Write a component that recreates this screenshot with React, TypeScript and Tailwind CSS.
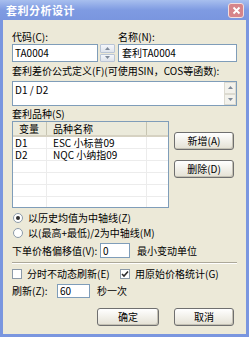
import clsx from "clsx";
import type { ReactNode } from "react";

function Btn({ children, className }: { children: ReactNode; className?: string }) {
  return (
    <div
      className={clsx(
        "flex items-center justify-center h-[18px] rounded-[3px] border border-[#6f6f6f] bg-gradient-to-b from-[#ffffff] to-[#e4e1d4] shadow-[inset_-1px_-1px_0_#c4c1b4]",
        className
      )}
    >
      {children}
    </div>
  );
}

function Radio({ checked }: { checked?: boolean }) {
  return (
    <span className="w-[10px] h-[10px] rounded-full border border-[#8c9aa8] bg-white flex items-center justify-center shrink-0">
      {checked && <span className="w-[4px] h-[4px] rounded-full bg-[#303030]" />}
    </span>
  );
}

function Check({ checked }: { checked?: boolean }) {
  return (
    <span className="w-[10px] h-[10px] border border-[#8c9aa8] bg-white flex items-center justify-center shrink-0">
      {checked && (
        <svg width="8" height="8" viewBox="0 0 8 8">
          <path d="M1 4 L3 6 L7 1.5" stroke="#2c2c2c" strokeWidth="1.6" fill="none" />
        </svg>
      )}
    </span>
  );
}

function Arrow({ up }: { up?: boolean }) {
  return (
    <svg width="5" height="3" viewBox="0 0 5 3">
      <path d={up ? "M0 3 L2.5 0 L5 3 Z" : "M0 0 L2.5 3 L5 0 Z"} fill="#7f8a9a" />
    </svg>
  );
}

const rows = [
  { v: "D1", n: "ESC 小标普09" },
  { v: "D2", n: "NQC 小纳指09" },
  { v: "", n: "" },
  { v: "", n: "" },
  { v: "", n: "" },
  { v: "", n: "" },
];

export default function App() {
  return (
    <div className="w-[249px] h-[337px] flex flex-col bg-[#7a96df] text-[10px] leading-[12px] text-black font-['Noto_Sans_CJK_SC',sans-serif] overflow-hidden">
      {/* Title bar */}
      <div className="h-[20px] shrink-0 flex items-center justify-between pl-[6px] pr-[5px] bg-gradient-to-b from-[#a8bfee] via-[#7f9be2] to-[#7a96df]">
        <span className="text-white font-bold text-[11px] tracking-[0.5px]">套利分析设计</span>
        <div className="w-[16px] h-[15px] rounded-[3px] border border-[#f2dede] bg-[#d6848a] flex items-center justify-center">
          <svg width="9" height="9" viewBox="0 0 9 9">
            <path d="M1.5 1.5 L7.5 7.5 M7.5 1.5 L1.5 7.5" stroke="#ffffff" strokeWidth="1.8" />
          </svg>
        </div>
      </div>

      {/* Body */}
      <div className="flex-1 mx-[3px] mb-[3px] bg-[#ece9d8] flex flex-col px-[9px] pt-[11px]">
        {/* Code / name */}
        <div className="flex">
          <span className="w-[106px]">代码(C):</span>
          <span>名称(N):</span>
        </div>
        <div className="flex mt-[1px] h-[18px]">
          <div className="w-[86px] border border-[#7f9db9] bg-white flex items-center pl-[2px]">TA0004</div>
          <div className="ml-[2px] w-[15px] flex flex-col gap-[1px]">
            <div className="flex-1 border border-[#b9c5d6] bg-gradient-to-b from-[#f5f7fb] to-[#dfe4ec] flex items-center justify-center rounded-[1px]">
              <Arrow up />
            </div>
            <div className="flex-1 border border-[#b9c5d6] bg-gradient-to-b from-[#f5f7fb] to-[#dfe4ec] flex items-center justify-center rounded-[1px]">
              <Arrow />
            </div>
          </div>
          <div className="ml-[3px] flex-1 border border-[#7f9db9] bg-white flex items-center pl-[3px]">套利TA0004</div>
        </div>

        {/* Formula */}
        <div className="mt-[3px] whitespace-nowrap">套利差价公式定义(F)(可使用SIN，COS等函数):</div>
        <div className="mt-[4px] h-[25px] border border-[#7f9db9] bg-white flex">
          <div className="flex-1 pl-[2px] pt-[2px]">D1 / D2</div>
          <div className="w-[12px] flex flex-col bg-[#f7f6f1]">
            <div className="flex-1 border border-[#dcdad0] bg-[#f3f2ec] flex items-center justify-center">
              <Arrow up />
            </div>
            <div className="flex-1 border border-[#dcdad0] bg-[#f3f2ec] flex items-center justify-center">
              <Arrow />
            </div>
          </div>
        </div>

        {/* List */}
        <div className="mt-[2px]">套利品种(S)</div>
        <div className="mt-[1px] flex">
          <div className="w-[157px] h-[87px] border border-[#7f9db9] bg-white flex flex-col overflow-hidden">
            <div className="h-[15px] shrink-0 flex bg-[#ebeadb] border-b-[2px] border-[#d6d2c2]">
              <div className="w-[34px] border-r border-[#c7c5b2] pl-[6px] flex items-center">变量</div>
              <div className="w-[100px] border-r border-[#c7c5b2] pl-[6px] flex items-center">品种名称</div>
              <div className="flex-1" />
            </div>
            {rows.map((r, i) => (
              <div key={i} className="h-[12px] shrink-0 flex border-b border-[#ececec] leading-[11px]">
                <div className="w-[34px] border-r border-[#ececec] pl-[2px]">{r.v}</div>
                <div className="w-[100px] border-r border-[#ececec] pl-[6px]">{r.n}</div>
                <div className="flex-1" />
              </div>
            ))}
          </div>
          <div className="ml-[5px] flex-1 flex flex-col pt-[11px] gap-[10px]">
            <Btn className="w-[60px]">新增(A)</Btn>
            <Btn className="w-[60px]">删除(D)</Btn>
          </div>
        </div>

        {/* Radios */}
        <div className="mt-[4px] flex items-center gap-[5px] pl-[1px]">
          <Radio checked />
          <span>以历史均值为中轴线(Z)</span>
        </div>
        <div className="mt-[3px] flex items-center gap-[5px] pl-[1px]">
          <Radio />
          <span>以(最高+最低)/2为中轴线(M)</span>
        </div>

        {/* Offset */}
        <div className="mt-[4px] flex items-center h-[15px]">
          <span className="w-[88px]">下单价格偏移值(V):</span>
          <div className="w-[30px] h-full border border-[#7f9db9] bg-white pl-[2px] flex items-center">0</div>
          <span className="ml-[7px]">最小变动单位</span>
        </div>

        <div className="mt-[4px] border-t border-[#aca899] border-b border-b-white" />

        {/* Checkboxes */}
        <div className="mt-[4px] flex items-center">
          <div className="w-[108px] flex items-center gap-[5px]">
            <Check />
            <span>分时不动态刷新(E)</span>
          </div>
          <div className="flex items-center gap-[5px]">
            <Check checked />
            <span>用原始价格统计(G)</span>
          </div>
        </div>

        {/* Refresh */}
        <div className="mt-[4px] flex items-center h-[14px]">
          <span className="w-[45px]">刷新(Z):</span>
          <div className="w-[33px] h-full border border-[#7f9db9] bg-white pl-[2px] flex items-center">60</div>
          <span className="ml-[7px]">秒一次</span>
        </div>

        {/* OK / Cancel */}
        <div className="mt-[10px] flex pl-[85px] gap-[15px]">
          <Btn className="w-[62px]">确定</Btn>
          <Btn className="w-[60px]">取消</Btn>
        </div>
      </div>
    </div>
  );
}
